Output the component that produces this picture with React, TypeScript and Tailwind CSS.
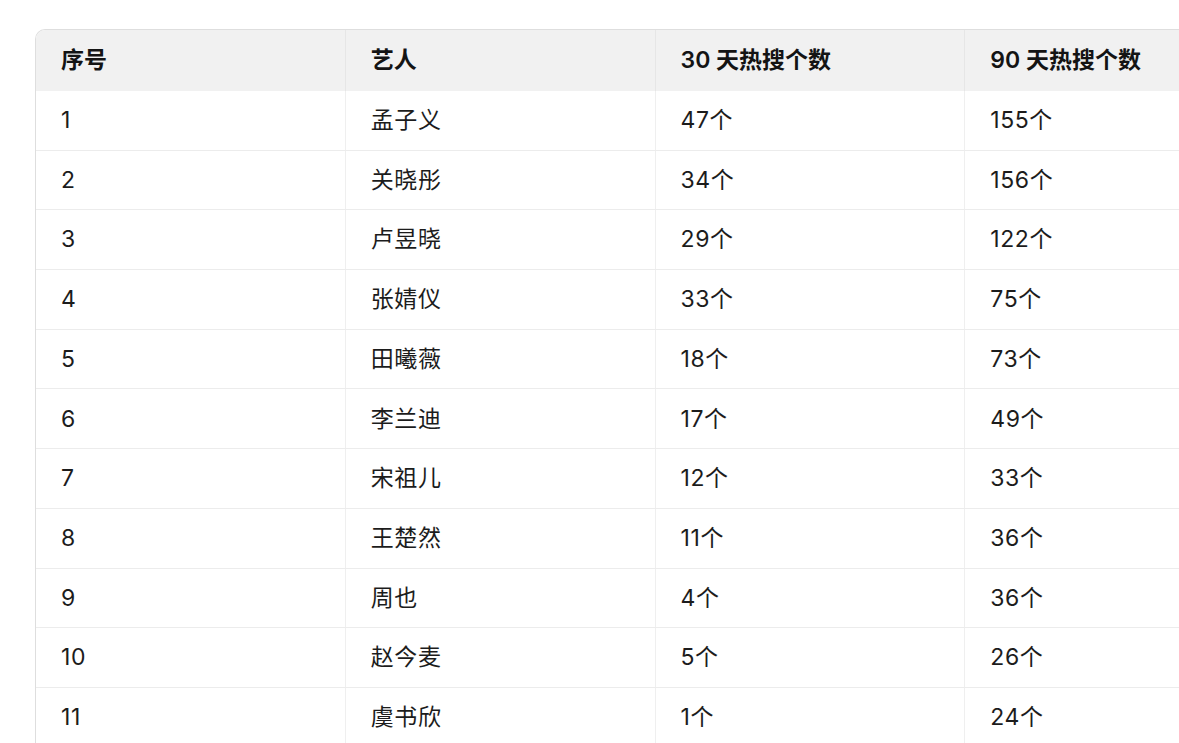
import React from "react";

const rows: [string, string, string, string][] = [
  ["1", "孟子义", "47个", "155个"],
  ["2", "关晓彤", "34个", "156个"],
  ["3", "卢昱晓", "29个", "122个"],
  ["4", "张婧仪", "33个", "75个"],
  ["5", "田曦薇", "18个", "73个"],
  ["6", "李兰迪", "17个", "49个"],
  ["7", "宋祖儿", "12个", "33个"],
  ["8", "王楚然", "11个", "36个"],
  ["9", "周也", "4个", "36个"],
  ["10", "赵今麦", "5个", "26个"],
  ["11", "虞书欣", "1个", "24个"],
];

const headers = ["序号", "艺人", "30 天热搜个数", "90 天热搜个数"];

export default function App() {
  return (
    <div
      className="w-full h-screen overflow-hidden bg-white pl-[35px] pt-[29px]"
      style={{ fontFamily: '"Inter", "Noto Sans CJK SC", sans-serif' }}
    >
      <div className="w-[1240px] rounded-tl-[10px] border-t border-l border-[#dedede] overflow-hidden">
        <div className="grid grid-cols-4 h-[61px] bg-[#f1f1f1] text-[23px] font-semibold text-[#141414]">
          {headers.map((h, i) => (
            <div
              key={h}
              className={`flex items-center pl-[25px] ${i < 3 ? "border-r border-[#e6e6e6]" : ""}`}
            >
              {h}
            </div>
          ))}
        </div>
        {rows.map((r) => (
          <div
            key={r[0]}
            className="grid grid-cols-4 h-[59.7px] border-b border-[#ececec] text-[23px] tracking-[0.6px] text-[#1c1c1c]"
          >
            {r.map((c, i) => (
              <div
                key={i}
                className={`flex items-center pl-[25px] ${i < 3 ? "border-r border-[#efefef]" : ""}`}
              >
                {c}
              </div>
            ))}
          </div>
        ))}
      </div>
    </div>
  );
}
